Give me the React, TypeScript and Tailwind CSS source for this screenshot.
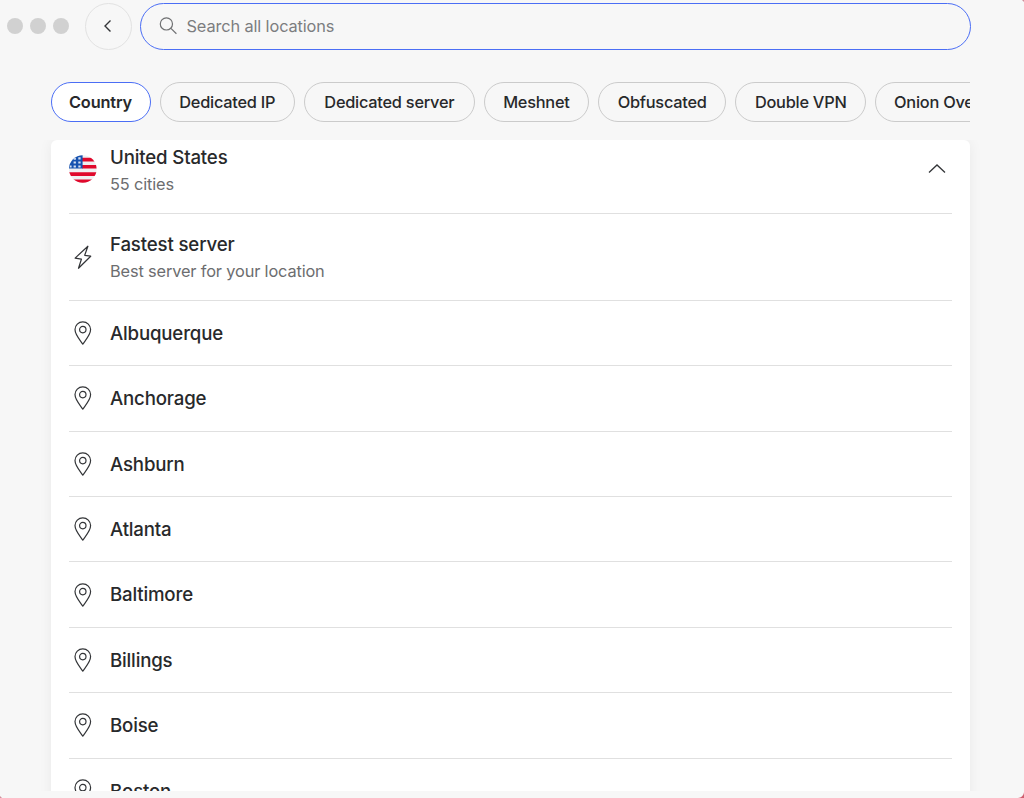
import { useState } from 'react';

const filters = [
  { label: 'Country', width: 'w-[100px]' },
  { label: 'Dedicated IP', width: 'w-[135px]' },
  { label: 'Dedicated server', width: 'w-[170.5px]' },
  { label: 'Meshnet', width: 'w-[105px]' },
  { label: 'Obfuscated', width: 'w-[128px]' },
  { label: 'Double VPN', width: 'w-[130.5px]' },
  { label: 'Onion Over VPN', width: 'w-[161px]' },
];

const cities = [
  'Albuquerque',
  'Anchorage',
  'Ashburn',
  'Atlanta',
  'Baltimore',
  'Billings',
  'Boise',
  'Boston',
];

function PinIcon() {
  return (
    <svg width="28" height="28" viewBox="0 0 28 28" fill="none" stroke="#333538" strokeWidth="1.2" className="shrink-0">
      <path
        d="M13.8 25.2C11.2 21.3 6 15.9 6 10.6a7.8 7.8 0 0 1 15.6 0c0 5.3-5.2 10.7-7.8 14.6Z"
        strokeLinejoin="round"
      />
      <circle cx="13.8" cy="10.6" r="3.2" />
    </svg>
  );
}

function BoltIcon() {
  return (
    <svg width="28" height="28" viewBox="0 0 28 28" fill="none" stroke="#333538" strokeWidth="1.2" className="shrink-0">
      <path d="M18.9 3.2 6.1 15.1l6.3 1.1-2.9 9.1 12.2-12.1-6-.9 3.2-9.1Z" strokeLinejoin="round" />
    </svg>
  );
}

function FlagIcon() {
  return (
    <svg width="28" height="28" viewBox="0 0 28 28" className="shrink-0">
      <defs>
        <clipPath id="flag-circle">
          <circle cx="13.8" cy="14" r="13.8" />
        </clipPath>
      </defs>
      <g clipPath="url(#flag-circle)">
        <rect width="28" height="28" fill="#f0f0f2" />
        <path
          d="M13 2.8h15v3.6H13zM13 10h15v3.6H13zM0 17.2h28v3.7H0zM0 24.4h28V28H0z"
          fill="#e0092c"
        />
        <path d="M0 0h13.6v13.6H0z" fill="#1652b0" />
        <path
          d="M4.6 2.8h2.3v2H4.6zM9.3 2.2h2.3v2.2H9.3zM4.6 6.4h2.3v2.2H4.6zM9.3 6.4h2.3v2.2H9.3zM.8 10.4h1.8v2H.8zM4.6 10.4h2.3v2.1H4.6zM9.3 10.4h2.3v2.1H9.3z"
          fill="#d5e0f2"
        />
      </g>
    </svg>
  );
}

export default function App() {
  const [active, setActive] = useState('Country');
  const [query, setQuery] = useState('');

  return (
    <div className="relative flex h-[798px] w-[1024px] flex-col overflow-hidden bg-[#f7f7f7] font-['Inter',sans-serif] text-[#28292b]">
      <header className="flex h-[52.5px] shrink-0 items-center pl-[7px]">
        <div className="flex gap-[7px]">
          <span className="size-4 rounded-full bg-[#d1d1d1]" />
          <span className="size-4 rounded-full bg-[#d1d1d1]" />
          <span className="size-4 rounded-full bg-[#d1d1d1]" />
        </div>
        <button className="ml-[15.5px] flex size-[47px] items-center justify-center rounded-full border border-[#e2e2e2]">
          <svg width="10" height="14" viewBox="0 0 10 14" fill="none" stroke="#333538" strokeWidth="1.4">
            <path d="M7.5 1.5 2 7l5.5 5.5" />
          </svg>
        </button>
        <label className="ml-[8.5px] flex h-[47px] w-[830.5px] items-center rounded-full border border-[#4b6ef5] pl-[18px]">
          <svg width="20" height="20" viewBox="0 0 20 20" fill="none" stroke="#6f7072" strokeWidth="1.2">
            <circle cx="7.4" cy="7.9" r="6.1" />
            <path d="m11.9 12.4 5.5 5.3" />
          </svg>
          <input
            value={query}
            onChange={(e) => setQuery(e.target.value)}
            placeholder="Search all locations"
            className="ml-[7.5px] flex-1 bg-transparent text-[16.33px] tracking-[-0.12px] outline-none placeholder:text-[#7c7d7f]"
          />
        </label>
      </header>

      <nav className="mt-[29px] ml-[50.5px] flex h-10 w-[919.5px] shrink-0 gap-[9.3px] overflow-hidden">
        {filters.map(({ label, width }) => (
          <button
            key={label}
            onClick={() => setActive(label)}
            className={`h-10 shrink-0 rounded-full border pt-px text-[16.33px] whitespace-nowrap ${width} ${
              active === label
                ? 'border-[#4b6ef5] bg-white font-semibold tracking-[-0.15px]'
                : 'border-[#cbcbcb] font-medium tracking-[-0.24px]'
            }`}
          >
            {label}
          </button>
        ))}
      </nav>

      <main className="mt-[18.5px] h-[651px] shrink-0 overflow-hidden px-[51px]">
        <div className="h-[700px] w-[919px] rounded-t-[6px] bg-white px-[18px] shadow-[0_0_14px_rgba(0,0,0,0.06)]">
          <div className="flex h-[73.5px] items-start border-b border-[#e0e0e0]">
            <div className="mt-[15px]">
              <FlagIcon />
            </div>
            <div className="ml-[13px] flex-1 pt-[5px]">
              <h2 className="text-[18.67px] leading-[26px] font-medium tracking-[-0.16px]">United States</h2>
              <p className="text-[16.33px] leading-[26px] tracking-[-0.14px] text-[#6c6d6f]">55 cities</p>
            </div>
            <svg width="20" height="12" viewBox="0 0 20 12" fill="none" stroke="#333538" strokeWidth="1.3" className="mt-[23px] mr-[5px]">
              <path d="m2 9.5 8-7.5 8 7.5" />
            </svg>
          </div>

          <div className="flex h-[87.3px] items-center border-b border-[#e0e0e0]">
            <BoltIcon />
            <div className="ml-[13px] pt-[3px]">
              <h3 className="text-[18.67px] leading-[26px] font-medium tracking-[-0.16px]">Fastest server</h3>
              <p className="text-[16.33px] leading-[26px] tracking-[-0.14px] text-[#6c6d6f]">Best server for your location</p>
            </div>
          </div>

          {cities.map((city) => (
            <div key={city} className="flex h-[65.42px] items-center border-b border-[#e0e0e0]">
              <PinIcon />
              <span className="ml-[13px] pt-[1.5px] text-[18.67px] leading-[26px] font-medium tracking-[-0.18px]">{city}</span>
            </div>
          ))}
        </div>
      </main>

      {/* desktop showing behind the rounded window corners */}
      <svg width="6" height="6" viewBox="0 0 6 6" className="absolute right-0 bottom-0">
        <path d="M6 0v6H0c3 0 6-3 6-6Z" fill="#cf5f70" />
      </svg>
      <svg width="2" height="2" viewBox="0 0 2 2" className="absolute bottom-0 left-0">
        <path d="M0 0v2h2Z" fill="#cf8f9b" />
      </svg>
      <svg width="2" height="2" viewBox="0 0 2 2" className="absolute top-0 right-0">
        <path d="M0 0h2v2Z" fill="#cf8f9b" />
      </svg>
    </div>
  );
}
